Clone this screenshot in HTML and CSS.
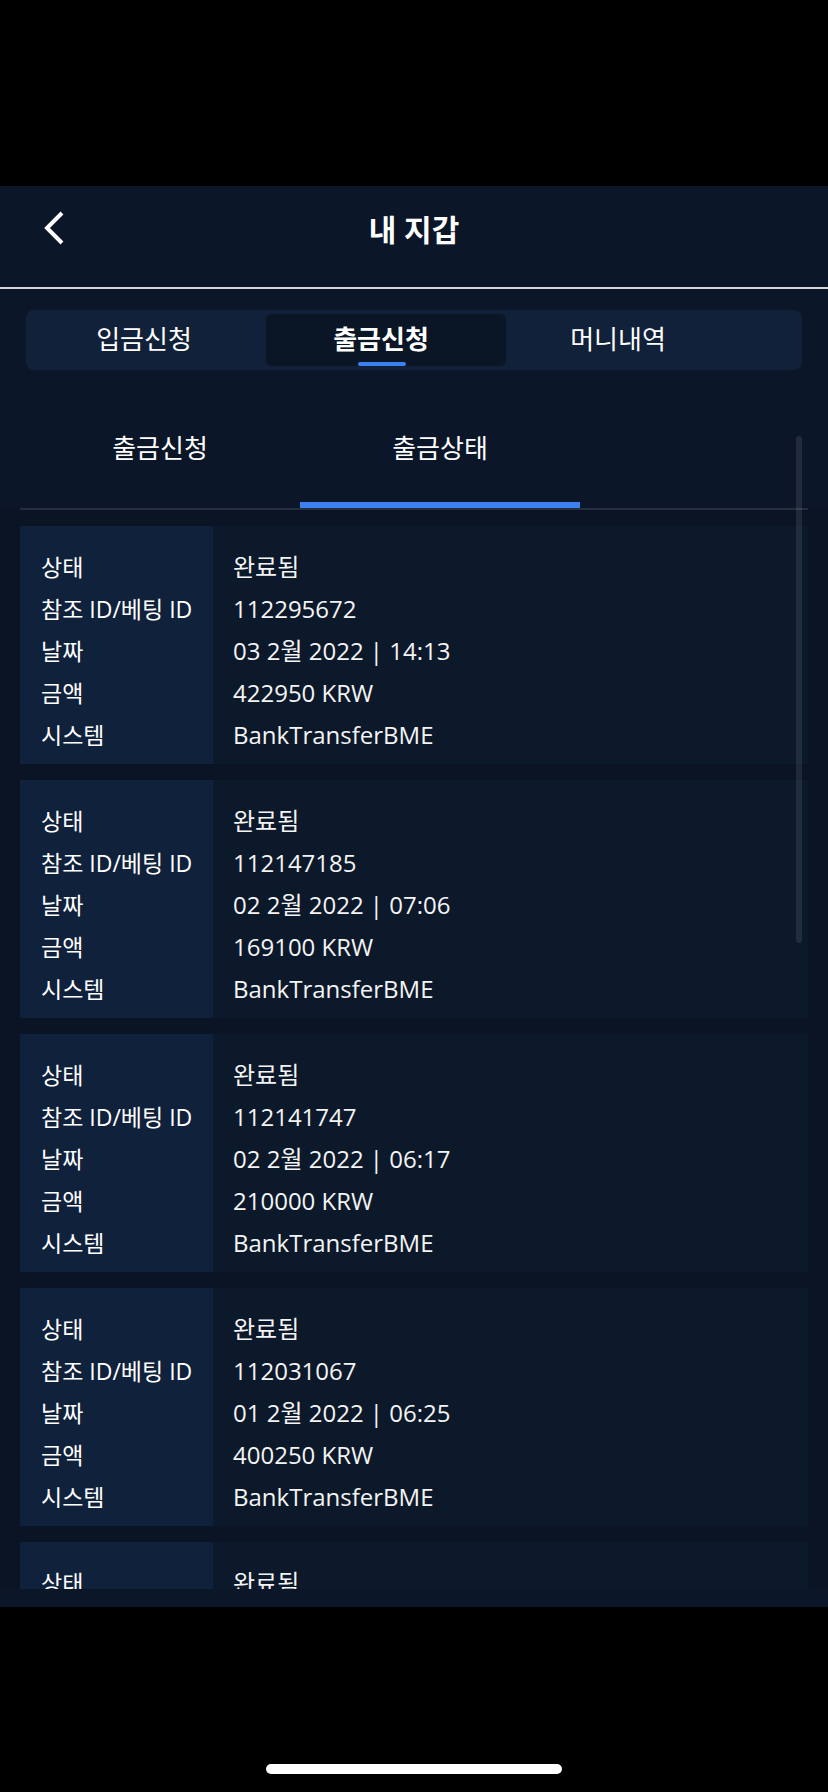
FILE: index.html
```html
<!DOCTYPE html>
<html lang="ko">
<head>
    <meta charset="UTF-8">
    <meta name="viewport" content="width=device-width, initial-scale=1.0">
    <title>내 지갑</title>
    <link rel="stylesheet" href="styles.css">
</head>
<body>
    <div class="statusbar"></div>

    <div class="wallet">
        <!-- Top bar -->
        <header class="topbar">
            <a class="back" href="#">
                <svg width="22" height="34" viewBox="0 0 22 34">
                    <path d="M18 2 L3 17 L18 32" fill="none" stroke="#fff" stroke-width="4"/>
                </svg>
            </a>
            <h1>내 지갑</h1>
            <span></span>
        </header>

        <!-- Main tabs -->
        <nav class="segments">
            <a href="#" class="segment first">입금신청</a>
            <a href="#" class="segment active">출금신청</a>
            <a href="#" class="segment last">머니내역</a>
        </nav>

        <!-- Sub tabs -->
        <div class="subtabs">
            <a href="#" class="subtab">출금신청</a>
            <a href="#" class="subtab active">출금상태</a>
        </div>

        <div class="list">
            <div class="card">
                <div class="labels">
                    <div>상태</div>
                    <div>참조 ID/베팅 ID</div>
                    <div>날짜</div>
                    <div>금액</div>
                    <div>시스템</div>
                </div>
                <div class="values">
                    <div>완료됨</div>
                    <div>112295672</div>
                    <div>03 2월 2022 | 14:13</div>
                    <div>422950 KRW</div>
                    <div>BankTransferBME</div>
                </div>
            </div>

            <div class="card">
                <div class="labels">
                    <div>상태</div>
                    <div>참조 ID/베팅 ID</div>
                    <div>날짜</div>
                    <div>금액</div>
                    <div>시스템</div>
                </div>
                <div class="values">
                    <div>완료됨</div>
                    <div>112147185</div>
                    <div>02 2월 2022 | 07:06</div>
                    <div>169100 KRW</div>
                    <div>BankTransferBME</div>
                </div>
            </div>

            <div class="card">
                <div class="labels">
                    <div>상태</div>
                    <div>참조 ID/베팅 ID</div>
                    <div>날짜</div>
                    <div>금액</div>
                    <div>시스템</div>
                </div>
                <div class="values">
                    <div>완료됨</div>
                    <div>112141747</div>
                    <div>02 2월 2022 | 06:17</div>
                    <div>210000 KRW</div>
                    <div>BankTransferBME</div>
                </div>
            </div>

            <div class="card">
                <div class="labels">
                    <div>상태</div>
                    <div>참조 ID/베팅 ID</div>
                    <div>날짜</div>
                    <div>금액</div>
                    <div>시스템</div>
                </div>
                <div class="values">
                    <div>완료됨</div>
                    <div>112031067</div>
                    <div>01 2월 2022 | 06:25</div>
                    <div>400250 KRW</div>
                    <div>BankTransferBME</div>
                </div>
            </div>

            <div class="card">
                <div class="labels">
                    <div>상태</div>
                </div>
                <div class="values">
                    <div>완료됨</div>
                </div>
            </div>
        </div>

        <div class="scroll-indicator"></div>
    </div>

    <div class="home-area">
        <div class="home-indicator"></div>
    </div>
</body>
</html>
```

FILE: styles.css
```css
body {
    margin: 0;
    padding: 0;
    background-color: #000;
    font-family: "Open Sans", "Noto Sans CJK KR", sans-serif;
    color: #fff;
}

a {
    color: #fff;
    text-decoration: none;
}

.statusbar {
    height: 186px;
    background-color: #000;
}

.wallet {
    position: relative;
    height: 1421px;
    background-color: #0b1628;
}

/* Top bar */
.topbar {
    height: 84px;
    padding-bottom: 17px;
    border-bottom: 2px solid #d6d6d6;
    display: grid;
    grid-template-columns: 1fr auto 1fr;
    align-items: center;
}

.topbar h1 {
    margin: 0;
    font-size: 30px;
    font-weight: bold;
}

.back {
    justify-self: start;
    margin-left: 44px;
    display: flex;
}

/* Main tabs */
.segments {
    margin: 21px 26px 0;
    height: 60px;
    box-sizing: border-box;
    padding: 4px;
    background-color: #11213a;
    border-radius: 8px;
    display: grid;
    grid-template-columns: 236px 240px 1fr;
}

.segment {
    position: relative;
    display: flex;
    align-items: center;
    justify-content: center;
    padding-bottom: 4px;
    font-size: 26px;
    border-radius: 6px;
}

.segment.first {
    padding-right: 8px;
}

.segment.active {
    padding-right: 10px;
    background-color: #0a1526;
    font-weight: bold;
}

.segment.active::after {
    content: "";
    position: absolute;
    bottom: 0;
    left: calc(50% - 28px);
    width: 48px;
    height: 4px;
    border-radius: 2px;
    background-color: #3b82f0;
}

.segment.last {
    padding-right: 68px;
}

/* Sub tabs */
.subtabs {
    margin: 40px 20px 0;
    display: flex;
    border-bottom: 2px solid #232f41;
}

.subtab {
    width: 280px;
    padding: 22px 0 38px;
    line-height: 32px;
    font-size: 26px;
    text-align: center;
    border-bottom: 6px solid transparent;
}

.subtab.active {
    border-bottom-color: #3b82f0;
}

/* Withdrawal list */
.list {
    height: 1079px;
    box-sizing: border-box;
    padding: 16px 20px 0;
    overflow: hidden;
    background-color: #0a1424;
    display: flex;
    flex-direction: column;
    gap: 16px;
}

.card {
    display: grid;
    grid-template-columns: 193px 1fr;
    background-color: #0c192b;
    line-height: 42px;
    flex-shrink: 0;
}

.labels {
    background-color: #10213b;
    padding: 20px 0 8px 21px;
    font-size: 23px;
}

.values {
    padding: 20px 0 8px 20px;
    font-size: 24px;
    color: #f4f4f4;
}

.scroll-indicator {
    position: absolute;
    left: 796px;
    top: 250px;
    width: 6px;
    height: 507px;
    border-radius: 3px;
    background-color: rgba(255, 255, 255, 0.09);
}

/* Bottom safe area */
.home-area {
    height: 185px;
    padding-top: 157px;
    box-sizing: border-box;
    background-color: #000;
}

.home-indicator {
    margin-left: 266px;
    width: 296px;
    height: 10px;
    border-radius: 5px;
    background-color: #fff;
}
```
